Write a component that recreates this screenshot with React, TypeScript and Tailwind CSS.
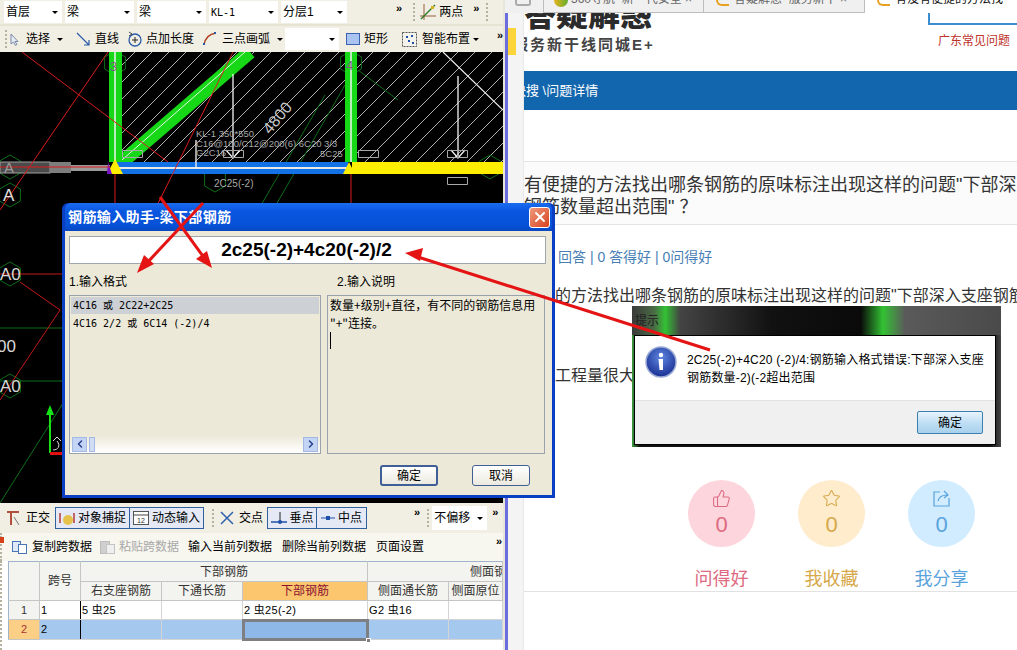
import { ThumbsUp, Star, ChevronLeft, ChevronRight, X } from 'lucide-react';

const FONT = 'font-["Liberation_Sans","Noto_Sans_CJK_SC",sans-serif]';

function Caret({ className = '' }: { className?: string }) {
  return <span className={`inline-block shrink-0 w-0 h-0 border-x-[3px] border-x-transparent border-t-[3px] border-t-black ${className}`} />;
}

function Combo({ label, width, mono }: { label: string; width: number; mono?: boolean }) {
  return (
    <div className="flex shrink-0 items-center justify-between bg-white h-[22px] pl-[2px] pr-1 text-[12px]" style={{ width }}>
      <span className={mono ? 'font-["DejaVu_Sans_Mono",monospace] text-[10px]' : ''}>{label}</span>
      <Caret />
    </div>
  );
}

function Chevrons({ className = '' }: { className?: string }) {
  return <span className={`shrink-0 text-[11px] font-bold leading-none ${className}`}>»</span>;
}

function Grip({ className = '' }: { className?: string }) {
  return <span className={`shrink-0 w-[2px] h-[18px] border-l-2 border-dotted border-[#b5b2a0] ${className}`} />;
}

function TopToolbars() {
  return (
    <div className="bg-[#f1efe4] text-black whitespace-nowrap shrink-0">
      <div className="flex items-center h-[26px] pl-[4px] gap-[3px] border-b-2 border-[#e6e3d3]">
        <Combo label="首层" width={58} />
        <Combo label="梁" width={69} />
        <Combo label="梁" width={69} />
        <Combo label="KL-1" width={69} mono />
        <Combo label="分层1" width={66} />
        <Chevrons className="ml-[46px] -mt-2" />
        <Grip className="ml-[8px]" />
        <svg className="ml-[2px] shrink-0" width="16" height="16" viewBox="0 0 16 16" fill="none">
          <path d="M4 0v16M0 12h16" stroke="#9a5b3c" />
          <path d="M1 15L15 1" stroke="#2f7d32" strokeWidth="1.5" />
          <rect x="11" y="2" width="3" height="3" fill="#d8b21e" />
        </svg>
        <span className="text-[12px]">两点</span>
        <Chevrons className="ml-[7px] -mt-2" />
        <Grip className="ml-[4px]" />
      </div>
      <div className="flex items-center h-[26px] pl-[5px] text-[12px]">
        <Grip />
        <svg className="ml-[3px] shrink-0" width="9" height="13" viewBox="0 0 9 13"><path d="M1 1v10l2.5-2 2 3.500 1.500-1-2-3h3z" fill="#e8ecf4" stroke="#7b8aa8" /></svg>
        <span className="ml-[7px]">选择</span>
        <Caret className="ml-[7px]" />
        <span className="ml-[7px] w-px h-[18px] bg-[#c9c6b6]" />
        <svg className="ml-[6px] shrink-0" width="14" height="14" viewBox="0 0 14 14" fill="none"><path d="M1 1l12 12M13 8v5H8" stroke="#2a5ba8" strokeWidth="1.200" /></svg>
        <span className="ml-[5px]">直线</span>
        <svg className="ml-[8px] shrink-0" width="16" height="16" viewBox="0 0 16 16" fill="none"><circle cx="8" cy="9" r="6" stroke="#2a5ba8" strokeWidth="1.300" /><path d="M8 6v6M5 9h6" stroke="#222" /><path d="M2 1l3 2-3 2" stroke="#444" /></svg>
        <span className="ml-[3px]">点加长度</span>
        <svg className="ml-[9px] shrink-0" width="14" height="14" viewBox="0 0 14 14" fill="none"><path d="M1 13C2 6 6 2 13 1" stroke="#b04020" strokeWidth="1.500" /><rect x="0" y="11" width="2" height="2" fill="#2a5ba8" /><rect x="11" y="0" width="2" height="2" fill="#2a5ba8" /></svg>
        <span className="ml-[5px]">三点画弧</span>
        <Caret className="ml-[7px]" />
        <div className="ml-[2px] w-[54px] shrink-0 h-[22px] bg-white flex items-center justify-end pr-1"><Caret /></div>
        <svg className="ml-[7px] shrink-0" width="14" height="12" viewBox="0 0 14 12"><rect x=".5" y=".5" width="13" height="11" fill="#a9c4f0" stroke="#3a62b0" /></svg>
        <span className="ml-[4px]">矩形</span>
        <span className="ml-[8px] w-px h-[18px] bg-[#c9c6b6]" />
        <svg className="ml-[6px] shrink-0" width="15" height="15" viewBox="0 0 15 15"><rect x=".5" y=".5" width="14" height="14" fill="#f4f4ec" stroke="#555" strokeDasharray="2 1" /><path d="M4 4h2v2H4zM9 3h2v2H9zM6 8h2v2H6zM10 10h2v2h-2z" fill="#1f4fa8" /></svg>
        <span className="ml-[5px]">智能布置</span>
        <Caret className="ml-[3px]" />
        <Chevrons className="ml-[18px] -mt-2" />
      </div>
    </div>
  );
}

function Label({ x, y, size = 10, fill = '#a9a9a9', children }: { x: number; y: number; size?: number; fill?: string; children: string }) {
  return <text x={x} y={y} fontSize={size} fill={fill} fontFamily="Liberation Sans, sans-serif">{children}</text>;
}

function Hex({ cx, cy, r = 12 }: { cx: number; cy: number; r?: number }) {
  const pts = [0, 1, 2, 3, 4, 5].map((i) => {
    const a = (Math.PI / 3) * i + Math.PI / 6;
    return `${cx + r * Math.cos(a)},${cy + r * Math.sin(a)}`;
  });
  return <polygon points={pts.join(' ')} fill="none" stroke="#0d6e1a" />;
}

function CadCanvas() {
  return (
    <svg className="block shrink-0 w-[503px] h-[451px]" viewBox="0 52 503 451">
      <defs>
        <pattern id="hatch" width="17" height="17" patternUnits="userSpaceOnUse">
          <path d="M-2 19L19 -2" stroke="#dcdcdc" strokeWidth=".8" />
        </pattern>
      </defs>
      <rect x="0" y="52" width="503" height="451" fill="#000" />
      <rect x="122" y="52" width="223" height="110" fill="url(#hatch)" />
      <rect x="357" y="52" width="146" height="110" fill="url(#hatch)" />

      {/* green grid lines */}
      <path d="M358 70L398 100M345 85L250 250M325 95L235 250M0 328h62M0 381h62M65 400L0 503" stroke="#0d6e1a" fill="none" />
      <Hex cx={115} cy={63} />
      <Hex cx={351} cy={63} />
      <Hex cx={10} cy={167} />
      <Hex cx={10} cy={195} />
      <Hex cx={490} cy={167} />
      <Hex cx={10} cy={274} />
      <Hex cx={10} cy={386} />
      <Hex cx={215} cy={180} />

      {/* beams */}
      <rect x="109" y="52" width="13" height="110" fill="#16d816" />
      <rect x="345" y="52" width="12" height="110" fill="#16d816" />
      <path d="M122 162L250 52" stroke="#16d816" strokeWidth="14" />
      <path d="M122 160L245 52" stroke="#e6f5e6" strokeWidth="1" />
      <path d="M115 52V162M351 52V162" stroke="#f2f2f2" strokeWidth="1.500" />
      <rect x="0" y="165" width="110" height="6" fill="#9a9a9a" />
      <rect x="0" y="162" width="50" height="11" fill="#4b4b4b" stroke="#a0a0a0" />
      <rect x="50" y="162" width="21" height="11" fill="#7d7d7d" />
      <rect x="115" y="162" width="233" height="12" fill="#1371e6" />
      <rect x="115" y="167" width="233" height="2" fill="#e8e8e8" />
      <rect x="352" y="162" width="151" height="12" fill="#ffee00" />
      <path d="M115 159l8 15h-16z" fill="#ffee00" />
      <path d="M108 162l-1 12h5z" fill="#7a14c8" />
      <path d="M349 162l6 12h-12z" fill="#ffee00" />

      {/* red construction lines */}
      <path d="M22 52L168 162M108 52L0 210M233 52L135 250M115 174V270M351 174V203M0 167h110" stroke="#d81c1c" fill="none" />
      <path d="M0 274h62M20 282L60 310M60 310L0 400" stroke="#c41a1a" fill="none" />
      <path d="M443 52L503 110" stroke="#f0f0f0" strokeWidth="1.200" />

      {/* load arrows and boxes */}
      <path d="M233 74V156M458 76V156M196 140V168" stroke="#f4f4f4" strokeWidth="1.300" />
      <path d="M226 150l7 8 7-8M451 150l7 8 7-8" stroke="#f4f4f4" strokeWidth="1.200" fill="none" />
      <path d="M122.500 150.500h20v7h-20zM223.500 150.500h20v7h-20zM358.500 150.500h20v7h-20zM447.500 150.500h20v7h-20zM447.500 177.500h20v7h-20z" stroke="#a8a8a8" fill="none" />

      <Label x={196} y={137} size={9.500}>KL-1 350*550</Label>
      <Label x={196} y={147} size={9.500}>C16@100/C12@200(6) 6C20 3/3</Label>
      <Label x={196} y={156} size={9.500}>G2C16</Label>
      <Label x={320} y={157} size={9.500}>5C25</Label>
      <Label x={214} y={187}>2C25(-2)</Label>
      <text x="0" y="0" fontSize="16" fill="#c8c8c8" fontFamily="Liberation Sans, sans-serif" transform="translate(270 135) rotate(-50)">4800</text>
      <Label x={110} y={71} size={13} fill="#7d5b86">3</Label>
      <Label x={346} y={70} size={13} fill="#7d5b86">4</Label>
      <Label x={4} y={173} size={15} fill="#9a9a9a">A</Label>
      <Label x={3} y={201} size={17} fill="#e0e0e0">A</Label>
      <Label x={0} y={280} size={17} fill="#d8d8d8">A0</Label>
      <Label x={-3} y={352} size={17} fill="#d8d8d8">00</Label>
      <Label x={0} y={392} size={17} fill="#d8d8d8">A0</Label>

      {/* axis gizmo */}
      <path d="M50 405l-4 10h3v38h2v-38h3z" fill="#16e016" />
      <rect x="50" y="452" width="12" height="3" fill="#e01010" />
      <path d="M53 441l4-4 4 4" stroke="#ddd" fill="none" />
      <path d="M53 450c5 0 8-4 4-9" stroke="#ddd" fill="none" />
    </svg>
  );
}

function SnapBox({ children, className = '' }: { children: React.ReactNode; className?: string }) {
  return (
    <div className={`flex shrink-0 items-center justify-center gap-[3px] h-[22px] bg-[#e4e9f5] border border-[#31609f] ${className}`}>
      {children}
    </div>
  );
}

function BottomToolbars() {
  return (
    <div className="bg-[#f1efe4] text-[12px] text-black whitespace-nowrap shrink-0">
      <div className="flex items-center h-[30px] pl-[7px]">
        <svg className="shrink-0" width="13" height="15" viewBox="0 0 13 15" fill="none"><path d="M0 1h12M4 1v13" stroke="#b0503c" strokeWidth="2" /><path d="M7 6l5 8" stroke="#777" /></svg>
        <span className="ml-[6px]">正交</span>
        <SnapBox className="ml-[5px] w-[75px]">
          <svg className="shrink-0" width="16" height="16" viewBox="0 0 16 16"><path d="M1 3v10M15 3v10" stroke="#b83a3a" strokeWidth="1.500" /><circle cx="9" cy="10" r="5" fill="#e5c24a" /></svg>
          <span>对象捕捉</span>
        </SnapBox>
        <SnapBox className="w-[75px] -ml-px">
          <svg className="shrink-0" width="16" height="14" viewBox="0 0 16 14"><rect x=".5" y=".5" width="15" height="13" fill="#fff" stroke="#555" /><path d="M0 4h16" stroke="#444" /><text x="4" y="12" fontSize="7" fill="#333">12</text></svg>
          <span>动态输入</span>
        </SnapBox>
        <Grip className="ml-[8px]" />
        <svg className="ml-[5px] shrink-0" width="16" height="16" viewBox="0 0 16 16" fill="none"><path d="M2 2l12 12M14 2L2 14" stroke="#2e62ad" strokeWidth="1.500" /></svg>
        <span className="ml-[4px]">交点</span>
        <SnapBox className="ml-[4px] w-[50px]">
          <svg className="shrink-0" width="16" height="12" viewBox="0 0 16 12"><path d="M0 10h16" stroke="#1f4fa8" strokeWidth="1.500" /><path d="M9 0v10" stroke="#222" /><circle cx="9" cy="10" r="2" fill="#1f4fa8" /></svg>
          <span>垂点</span>
        </SnapBox>
        <SnapBox className="w-[51px] -ml-px">
          <svg className="shrink-0" width="14" height="8" viewBox="0 0 14 8"><path d="M0 4h14" stroke="#1f4fa8" /><rect x="5" y="2" width="4" height="4" fill="#1f4fa8" /></svg>
          <span>中点</span>
        </SnapBox>
        <Chevrons className="ml-[47px] -mt-3" />
        <Grip className="ml-[7px]" />
        <div className="ml-[3px] w-[55px] shrink-0 h-[24px] bg-white flex items-center justify-between pl-[2px] pr-1"><span>不偏移</span><Caret /></div>
        <Chevrons className="ml-[5px] -mt-3" />
      </div>
      <div className="relative flex items-center h-[28px] pl-[10px] bg-[#f7f6ef] border-l-2 border-dotted border-[#b5b2a0]">
        <span className="absolute -left-[2px] top-[4px] w-[4px] h-[6px] bg-[#d8401c]" />
        <svg className="shrink-0" width="15" height="13" viewBox="0 0 15 13"><rect x=".5" y=".5" width="8" height="10" fill="#dfe8f6" stroke="#4a74b8" /><rect x="6.500" y="3.500" width="8" height="9" fill="#fff" stroke="#4a74b8" /></svg>
        <span className="ml-[5px]">复制跨数据</span>
        <svg className="ml-[8px] shrink-0" width="15" height="14" viewBox="0 0 15 14"><rect x=".5" y="1.500" width="9" height="12" fill="#cfcfcf" stroke="#bdbdbd" /><rect x="6.500" y="4.500" width="8" height="9" fill="#efefef" stroke="#c4c4c4" /></svg>
        <span className="ml-[4px] text-[#a8a8a8]">粘贴跨数据</span>
        <span className="ml-[9px]">输入当前列数据</span>
        <span className="ml-[10px]">删除当前列数据</span>
        <span className="ml-[10px]">页面设置</span>
        <Chevrons className="ml-[72px] -mt-3" />
      </div>
    </div>
  );
}

const headCell = 'border-r border-b border-[#c5c5c5] bg-[#f3f3ef] font-normal text-[#333] p-0 text-center overflow-hidden whitespace-nowrap';
const bodyCell = 'border-r border-b border-[#d4d4d4] p-0 px-[1px] text-[11px] tracking-[0.3px] text-black overflow-hidden whitespace-nowrap';

function RebarTable() {
  return (
    <div className="flex-1 bg-white pl-[6px] text-[12px] overflow-hidden border-l-2 border-dotted border-[#b5b2a0]">
      <table className="table-fixed w-[494px] border-collapse border-t border-l border-[#9fb4cc]">
        <colgroup>
          <col className="w-[31px]" />
          <col className="w-[41px]" />
          <col className="w-[81px]" />
          <col className="w-[81px]" />
          <col className="w-[125px]" />
          <col className="w-[81px]" />
          <col className="w-[54px]" />
        </colgroup>
        <tbody>
          <tr className="h-[20px]">
            <th rowSpan={2} className={headCell} />
            <th rowSpan={2} className={headCell}>跨号</th>
            <th colSpan={3} className={headCell}>下部钢筋</th>
            <th colSpan={2} className={`${headCell} text-left`}><span className="ml-[102px]">侧面钢筋</span></th>
          </tr>
          <tr className="h-[19px]">
            <th className={headCell}>右支座钢筋</th>
            <th className={headCell}>下通长筋</th>
            <th className={`${headCell} !bg-[#fbc66e] !text-[#8a1030]`}>下部钢筋</th>
            <th className={headCell}>侧面通长筋</th>
            <th className={headCell}>侧面原位</th>
          </tr>
          <tr className="h-[19px]">
            <td className={`${headCell} text-[11px]`}>1</td>
            <td className={`${bodyCell} border-r-black`}>1</td>
            <td className={bodyCell}>5 虫25</td>
            <td className={bodyCell} />
            <td className={bodyCell}>2 虫25(-2)</td>
            <td className={bodyCell}>G2 虫16</td>
            <td className={bodyCell} />
          </tr>
          <tr className="h-[20px] bg-[#a5c8ee]">
            <td className={`${headCell} !bg-[#fbcf85] text-[11px] text-[#a33]`}>2</td>
            <td className={`${bodyCell} border-r-black`}>2</td>
            <td className={bodyCell} />
            <td className={bodyCell} />
            <td className="relative p-0 bg-[#8db8e8] outline-[3px] -outline-offset-2 outline-[#7d7f82]">
              <span className="absolute right-[-3px] bottom-[-3px] w-[5px] h-[5px] bg-[#7d7f82] border border-white" />
            </td>
            <td className={bodyCell} />
            <td className={bodyCell} />
          </tr>
        </tbody>
      </table>
    </div>
  );
}

function TabBar() {
  return (
    <div className="flex h-[13px] shrink-0 bg-[#f0f0f0] overflow-hidden text-[12px] text-[#666] leading-none">
      <div className="w-[39px] pl-[10px] border-r border-[#bdbdbd]">
        <span className="block w-[16px] h-[6px] border-2 border-t-0 border-[#aaa] rounded-b-[3px]" />
      </div>
      <div className="w-[160px] flex items-start pl-[10px] gap-[3px] border-r border-[#bdbdbd] border-b">
        <span className="w-[14px] h-[7px] rounded-b-full bg-[linear-gradient(90deg,#e9b21c,#5fae2e)] shrink-0" />
        <span className="-mt-[7px] truncate">360导航_新一代安全 ×</span>
      </div>
      <div className="w-[161px] flex items-start pl-[12px] gap-[5px] border-r border-[#bdbdbd] border-b">
        <span className="w-[13px] h-[6px] border-b-2 border-l-2 border-[#e8a020] rounded-bl-full shrink-0" />
        <span className="-mt-[7px] truncate">答疑解惑_服务新干 ×</span>
      </div>
      <div className="flex-1 bg-white flex items-start pl-[12px] gap-[5px] text-[#111]">
        <span className="w-[13px] h-[6px] border-b-2 border-l-2 border-[#e8a020] rounded-bl-full shrink-0" />
        <span className="-mt-[7px] whitespace-nowrap">有没有便捷的方法找</span>
      </div>
    </div>
  );
}

function CircleAction({ icon, count, label, bg, color }: { icon: React.ReactNode; count: string; label: string; bg: string; color: string }) {
  return (
    <div className="w-[67px] flex flex-col items-center" style={{ color }}>
      <div className="w-[67px] h-[67px] rounded-full flex flex-col items-center pt-[9px]" style={{ backgroundColor: bg }}>
        {icon}
        <span className="mt-[4px] text-[22px] leading-[26px] font-['Liberation_Sans',sans-serif]">{count}</span>
      </div>
      <span className="mt-[20px] text-[18px] leading-[24px] whitespace-nowrap">{label}</span>
    </div>
  );
}

function BrowserPane() {
  return (
    <div className="flex flex-col w-[512px] shrink-0 h-full">
      <TabBar />
      <div className="flex flex-1 min-h-0">
        <div className="w-[3px] bg-[#6a6ddc] shrink-0" />
        <div className="w-[16px] bg-[#f4f4f4] shrink-0 border-r border-[#e9e9e9] pt-[15px]">
          <div className="w-[8px] h-[27px] bg-[#fcd53a]" />
        </div>
        <div className="flex-1 min-w-0 bg-white overflow-hidden">
          <div className="h-[58px] relative overflow-hidden">
            <div className="-mt-[13px] text-[32px] font-black leading-[31px] text-[#2b2b2b] whitespace-nowrap">答疑解惑</div>
            <div className="mt-[5px] -ml-[11px] text-[15px] font-bold text-[#444] leading-[18px] tracking-[2px] whitespace-nowrap">服务新干线同城E+</div>
            <div className="absolute left-[404px] top-0 w-[90px] h-[12px] border-l-2 border-b-2 border-[#3a8ed0]" />
            <div className="absolute left-[414px] top-[19px] text-[12px] text-[#c0312b] whitespace-nowrap">广东常见问题</div>
          </div>
          <div className="h-[39px] bg-[#1166ad] text-white text-[13px] flex items-center whitespace-nowrap">
            <span className="-ml-[11px]">快搜 \问题详情</span>
          </div>
          <div className="mt-[51px] border-t border-[#e4e4e4] bg-[#fbfbfb]">
            <div className="text-[18px] leading-[22px] text-[#333] pt-[12px] pb-[5px] w-[560px] h-[62px]">
              有便捷的方法找出哪条钢筋的原味标注出现这样的问题"下部深入支座
              <br />
              钢筋数量超出范围" ？
            </div>
          </div>
          <div className="border-t border-[#e4e4e4] pt-[23px] pl-[34px] text-[14px] leading-[18px] text-[#4a7fb5] whitespace-nowrap">
            回答 | 0 答得好 | 0问得好
          </div>
          <div className="mt-[20px] pl-[31px] text-[16px] leading-[20px] text-[#333] whitespace-nowrap">的方法找出哪条钢筋的原味标注出现这样的问题"下部深入支座钢筋</div>
          <div className="mt-[60px] pl-[31px] text-[16px] leading-[20px] text-[#333] whitespace-nowrap">工程量很大，</div>
          <div className="mt-[94px] pl-[164px] flex gap-[43px]">
            <CircleAction
              icon={<ThumbsUp size={19} strokeWidth={1.300} />}
              count="0"
              label="问得好"
              bg="#fdd5dc"
              color="#dd6a80"
            />
            <CircleAction
              icon={<Star size={19} strokeWidth={1.300} />}
              count="0"
              label="我收藏"
              bg="#ffeccd"
              color="#d6a84a"
            />
            <CircleAction
              icon={
                <svg width="19" height="19" viewBox="0 0 19 19" fill="none" stroke="currentColor" strokeWidth="1.200">
                  <path d="M8 3H2v14h15v-8" />
                  <path d="M6 12c1-4 4-6 9-6M12 2l4 4-4 3" />
                </svg>
              }
              count="0"
              label="我分享"
              bg="#d2ecff"
              color="#58a3dc"
            />
          </div>
          <div className="border-t border-[#e2e2e2]" />
        </div>
      </div>
    </div>
  );
}

function RebarDialog() {
  return (
    <div className="absolute left-[62px] top-[203px] w-[493px] h-[295px] rounded-t-[6px] bg-[#0a3fc4] p-[3px] pt-0 flex flex-col z-10 text-[12px] text-black">
      <div className="h-[28px] shrink-0 flex items-center justify-between rounded-t-[6px] bg-[linear-gradient(180deg,#1a6cf0,#0a56e0_30%,#0552d8_80%,#0a48c0)] pl-[3px] pr-[2px]">
        <span className="text-white font-bold text-[14px] tracking-[0.4px]">钢筋输入助手-梁下部钢筋</span>
        <span className="w-[21px] h-[21px] rounded-[3px] border border-white bg-[linear-gradient(135deg,#ee9a7c,#d8421f)] flex items-center justify-center text-white">
          <X size={16} strokeWidth={3} />
        </span>
      </div>
      <div className="flex-1 bg-[#ece9d8] pl-[4px] pr-[6px] pt-[5px] flex flex-col">
        <div className="h-[28px] bg-white border border-[#a0a6b0] text-center font-bold text-[19px] leading-[26px] font-['Liberation_Sans',sans-serif] pr-[2px]">
          2c25(-2)+4c20(-2)/2
        </div>
        <div className="flex h-[18px] mt-[9px] items-center">
          <span className="w-[268px]">1.输入格式</span>
          <span>2.输入说明</span>
        </div>
        <div className="flex mt-[4px] gap-[6px] h-[159px]">
          <div className="w-[252px] border border-[#9aa2ad] flex flex-col">
            <div className="h-[17px] m-px bg-[#cdd0d4] pl-[2px] font-['DejaVu_Sans_Mono','Noto_Sans_CJK_SC',monospace] text-[10px] leading-[17px] whitespace-pre">4C16 或 2C22+2C25</div>
            <div className="h-[18px] m-px -mt-px pl-[2px] font-['DejaVu_Sans_Mono','Noto_Sans_CJK_SC',monospace] text-[10px] leading-[19px] whitespace-pre">4C16 2/2 或 6C14 (-2)/4</div>
            <div className="mt-auto h-[18px] flex items-center justify-between px-[2px] bg-[linear-gradient(180deg,#ece9d8,#fff)]">
              <div className="flex items-center gap-[2px]">
                <span className="w-[15px] h-[15px] bg-[#c4d4f4] border border-[#a4b8e4] flex items-center justify-center text-[#27408b]"><ChevronLeft size={12} strokeWidth={3} /></span>
                <span className="w-[6px] h-[15px] bg-[#d2dcf4] border border-[#a4b8e4]" />
              </div>
              <span className="w-[15px] h-[15px] bg-[#c4d4f4] border border-[#a4b8e4] flex items-center justify-center text-[#27408b]"><ChevronRight size={12} strokeWidth={3} /></span>
            </div>
          </div>
          <div className="w-[218px] border border-[#9aa2ad] px-[2px] leading-[18px] font-['Noto_Sans_CJK_SC',sans-serif]">
            数量+级别+直径，有不同的钢筋信息用
            <br />
            "+"连接。
            <br />
            <span className="inline-block w-px h-[17px] bg-black" />
          </div>
        </div>
        <div className="flex mt-[11px] pl-[311px] gap-[34px]">
          <button className="w-[58px] h-[21px] rounded-[3px] border-2 border-[#3f5f96] bg-[linear-gradient(180deg,#fff,#eceadf)]">确定</button>
          <button className="w-[58px] h-[21px] rounded-[3px] border border-[#3f5f96] bg-[linear-gradient(180deg,#fff,#eceadf)]">取消</button>
        </div>
      </div>
    </div>
  );
}

function AlertDialog() {
  return (
    <div className="absolute left-[632px] top-[306px] w-[369px] h-[141px] z-10 flex flex-col text-[12px] text-black p-[2px] pt-0 bg-[linear-gradient(90deg,#3fa03f_0%,#111_2%,#111_97%,#444_100%)]">
      <div className="h-[29px] -mx-[2px] shrink-0 bg-[linear-gradient(90deg,#3a3a3a_0%,#4a6a45_6%,#33c233_9%,#444_13%,#111_38%,#0a0a0a_62%,#33c233_68%,#5a5a5a_74%,#4a4a4a_100%)] pl-[3px] flex items-center">
        <span className="text-[#222]">提示</span>
      </div>
      <div className="flex-1 border border-black flex flex-col bg-white mr-[3px]">
        <div className="h-[65px] flex pl-[10px] pt-[10px] border-b border-[#e2e2e2]">
          <svg width="32" height="32" viewBox="0 0 32 32" className="shrink-0">
            <defs>
              <radialGradient id="info" cx="50%" cy="35%" r="70%">
                <stop offset="0" stopColor="#5f86e0" />
                <stop offset="1" stopColor="#14298c" />
              </radialGradient>
            </defs>
            <circle cx="16" cy="16" r="15" fill="url(#info)" stroke="#9aaad4" strokeWidth="1.500" />
            <circle cx="16" cy="9" r="2.200" fill="#fff" />
            <path d="M13.500 13h4.500v11h-3.500z" fill="#fff" />
          </svg>
          <div className="ml-[10px] leading-[18px] pt-[5px] tracking-[0.2px] whitespace-nowrap">
            2C25(-2)+4C20 (-2)/4:钢筋输入格式错误:下部深入支座
            <br />
            钢筋数量-2)(-2超出范围
          </div>
        </div>
        <div className="flex-1 bg-[#f0f0f0] flex justify-end items-start pt-[10px] pr-[12px]">
          <button className="w-[66px] h-[23px] rounded-[2px] border border-[#3c7fb1] bg-[linear-gradient(180deg,#e8f4fc,#c0dff4_50%,#a8d0ec)]">确定</button>
        </div>
      </div>
    </div>
  );
}

function Arrows() {
  return (
    <svg className="absolute inset-0 z-20 pointer-events-none" width="1017" height="650" viewBox="0 0 1017 650">
      <g stroke="#e41414" strokeWidth="3" fill="#e41414">
        <path d="M160 197L205 259" />
        <path d="M212 268l-16-9 11-8z" stroke="none" />
        <path d="M203 203L145 265" />
        <path d="M137 273l7-18 10 9z" stroke="none" />
        <path d="M710 350L418 257" />
        <path d="M405 253l18-5-3 13z" stroke="none" />
      </g>
    </svg>
  );
}

export default function App() {
  return (
    <div className={`relative flex w-[1017px] h-[650px] overflow-hidden bg-white ${FONT}`}>
      <div className="w-[505px] shrink-0 flex flex-col h-full overflow-hidden border-r-2 border-[#e8e6da]">
        <TopToolbars />
        <CadCanvas />
        <BottomToolbars />
        <RebarTable />
      </div>
      <BrowserPane />
      <RebarDialog />
      <AlertDialog />
      <Arrows />
    </div>
  );
}
